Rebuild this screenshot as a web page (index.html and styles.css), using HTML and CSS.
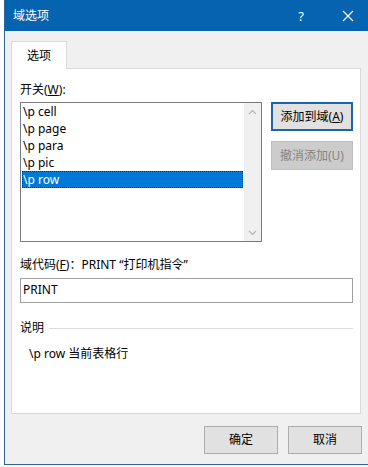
FILE: index.html
```html
<!DOCTYPE html>
<html lang="zh-CN">
<head>
<meta charset="utf-8">
<title>域选项</title>
<link rel="stylesheet" href="styles.css">
</head>
<body>
<div class="dialog">
  <div class="titlebar">
    <span class="title">域选项</span>
    <span class="help">?</span>
    <span class="close"><svg width="12" height="12" viewBox="0 0 12 12"><path d="M1 1 L11 11 M11 1 L1 11" stroke="#fff" stroke-width="1.1" fill="none"/></svg></span>
  </div>
  <div class="body">
    <div class="tabs"><div class="tab">选项</div></div>
    <div class="panel">
      <div class="label">开关(<u>W</u>):</div>
      <div class="row">
        <div class="listbox">
          <div class="items">
            <div class="item">\p cell</div>
            <div class="item">\p page</div>
            <div class="item">\p para</div>
            <div class="item">\p pic</div>
            <div class="item selected">\p row</div>
          </div>
          <div class="scrollbar">
            <span class="arrow"><svg width="9" height="6" viewBox="0 0 9 6"><polyline points="1,5 4.5,1.5 8,5" stroke="#b4b4b4" stroke-width="1.2" fill="none"/></svg></span>
            <span class="arrow"><svg width="9" height="6" viewBox="0 0 9 6"><polyline points="1,1 4.5,4.5 8,1" stroke="#b4b4b4" stroke-width="1.2" fill="none"/></svg></span>
          </div>
        </div>
        <div class="side-buttons">
          <div class="btn btn-default">添加到域(<u>A</u>)</div>
          <div class="btn btn-disabled">撤消添加(U)</div>
        </div>
      </div>
      <div class="label code-label">域代码(<u>F</u>)：PRINT “打印机指令”</div>
      <div class="input">PRINT</div>
      <div class="group-head"><span>说明</span><span class="rule"></span></div>
      <div class="desc">\p row 当前表格行</div>
    </div>
    <div class="footer">
      <div class="btn btn-foot">确定</div>
      <div class="btn btn-foot">取消</div>
    </div>
  </div>
</div>
</body>
</html>
```

FILE: styles.css
```css
* { box-sizing: border-box; }
html, body { margin: 0; padding: 0; }
body {
  width: 368px;
  height: 467px;
  background: #ffffff;
  overflow: hidden;
  font-family: "Noto Sans", "Noto Sans CJK SC", sans-serif;
  font-size: 12px;
  color: #000;
}
.dialog {
  margin-left: 4px;
  width: 364px;
  height: 465px;
  background: #f0f0f0;
  border-left: 1px solid #2f6596;
  border-bottom: 1px solid #2f6596;
  display: flex;
  flex-direction: column;
}
.titlebar {
  height: 31px;
  background: #0563af;
  color: #fff;
  display: flex;
  align-items: center;
  padding-left: 8px;
  font-size: 12px;
}
.title { flex: 1; line-height: 16px; }
.help { width: 14px; text-align: center; margin-right: 34px; font-size: 13px; }
.close { display: flex; align-items: center; margin-right: 14px; }
.body {
  flex: 1;
  display: flex;
  flex-direction: column;
  padding: 10px 7px 0 6px;
}
.tabs { display: flex; }
.tab {
  width: 56px;
  height: 28px;
  background: #fff;
  border: 1px solid #d9d9d9;
  border-bottom: none;
  margin-bottom: -1px;
  position: relative;
  z-index: 1;
  display: flex;
  align-items: center;
  justify-content: center;
  line-height: 16px;
}
.panel {
  height: 346px;
  background: #fff;
  border: 1px solid #d9d9d9;
  padding: 13px 7px 0 8px;
  display: flex;
  flex-direction: column;
}
.label { line-height: 16px; height: 16px; }
.row {
  display: flex;
  gap: 9px;
  margin-top: 4px;
}
.listbox {
  width: 242px;
  height: 140px;
  border: 1px solid #7a7a7a;
  display: flex;
}
.items {
  flex: 1;
  padding: 0 1px 0 1px;
}
.item {
  height: 17px;
  line-height: 17px;
  padding-left: 1px;
  white-space: nowrap;
}
.selected {
  background: #0078d7;
  color: #fff;
  outline: 1px dotted #10325a;
  outline-offset: -1px;
}
.scrollbar {
  width: 17px;
  background: #f0f0f0;
  display: flex;
  flex-direction: column;
  justify-content: space-between;
}
.arrow {
  height: 17px;
  display: flex;
  align-items: center;
  justify-content: center;
}
.side-buttons {
  width: 82px;
  display: flex;
  flex-direction: column;
  gap: 10px;
}
.btn {
  background: #e1e1e1;
  border: 1px solid #adadad;
  display: flex;
  align-items: center;
  justify-content: center;
  line-height: 16px;
  white-space: nowrap;
}
.btn-default {
  height: 29px;
  border: 2px solid #1f63a8;
}
.btn-disabled {
  height: 29px;
  background: #cccccc;
  border-color: #bfbfbf;
  color: #838383;
}
.code-label { margin-top: 15px; }
.input {
  margin-top: 5px;
  height: 25px;
  border: 1px solid #a0a0a0;
  padding-left: 2px;
  line-height: 22px;
}
.group-head {
  margin-top: 17px;
  display: flex;
  align-items: center;
  gap: 5px;
  line-height: 16px;
}
.rule {
  flex: 1;
  height: 1px;
  background: #dcdcdc;
}
.desc {
  margin-top: 10px;
  padding-left: 9px;
  line-height: 16px;
}
.footer {
  margin-top: 12px;
  margin-right: -1px;
  display: flex;
  justify-content: flex-end;
  gap: 10px;
}
.btn-foot {
  width: 74px;
  height: 28px;
}
```
